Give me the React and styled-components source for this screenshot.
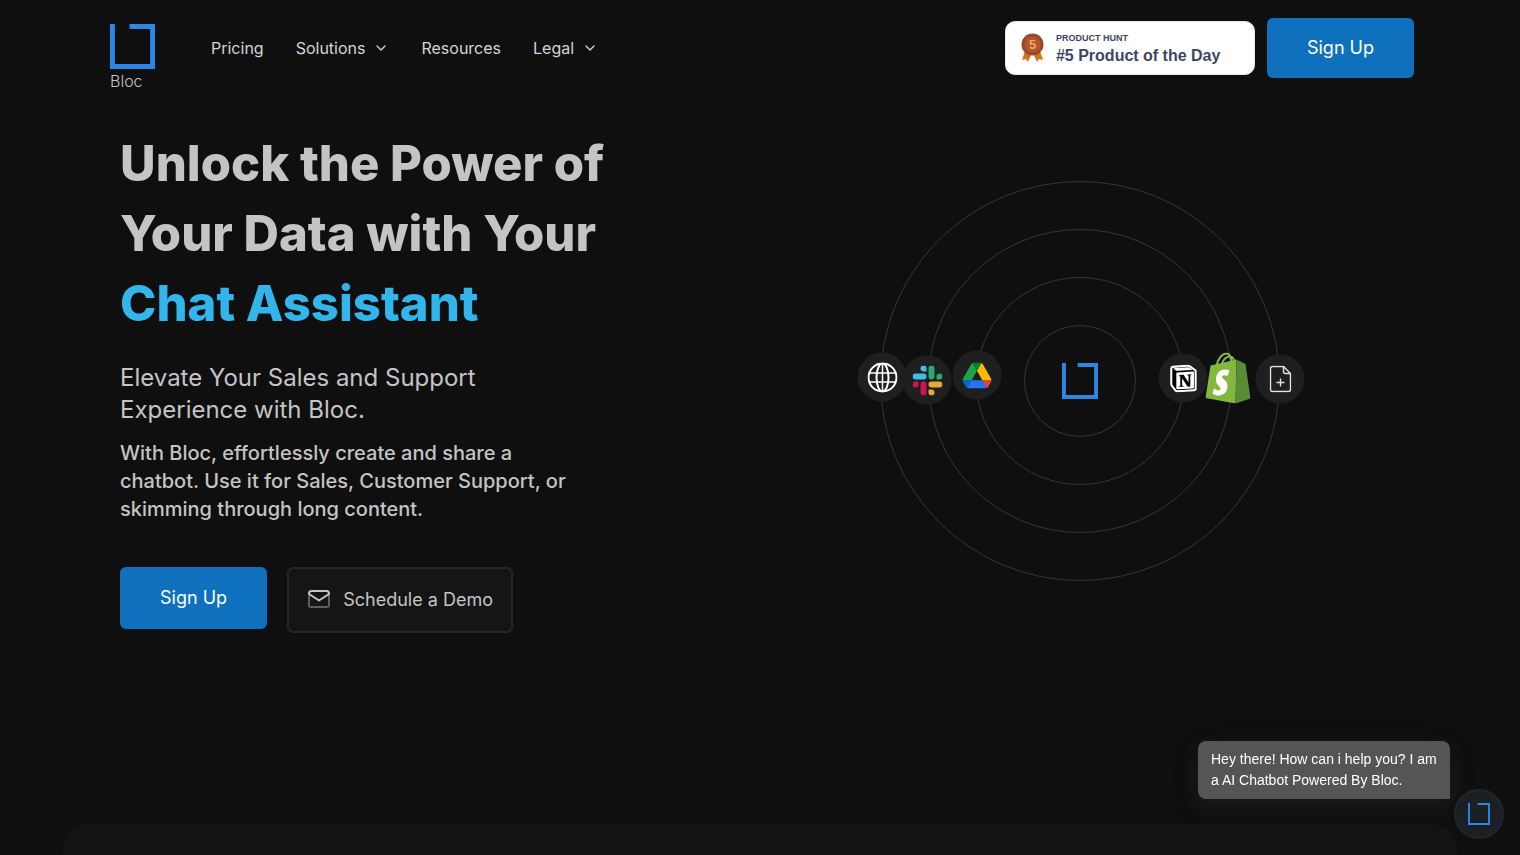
import React from "react";
import styled, { createGlobalStyle } from "styled-components";
import { ChevronDown } from "lucide-react";

const GlobalStyle = createGlobalStyle`
  * {
    box-sizing: border-box;
  }

  body {
    margin: 0;
    background: #0f0f0f;
    color: #c4c4c4;
    font-family: Inter, "Liberation Sans", sans-serif;
  }

  h1, h2, p {
    margin: 0;
  }
`;

const Page = styled.div`
  min-height: 100vh;
  display: flex;
  flex-direction: column;
`;

const Header = styled.header`
  display: flex;
  align-items: flex-start;
  justify-content: space-between;
  padding: 18px 106px 0 110px;
`;

const HeaderGroup = styled.div`
  display: flex;
  align-items: flex-start;
  gap: ${({ $gap }) => $gap}px;
`;

const Brand = styled.a`
  display: flex;
  flex-direction: column;
  padding-top: 6px;
  color: #c4c4c4;
  font-size: 16px;
  font-weight: 300;
  line-height: 24px;
  text-decoration: none;
`;

const Nav = styled.nav`
  display: flex;
  align-items: center;
  gap: 32px;
  height: 60px;
`;

const navItem = `
  color: #d1d5db;
  font-family: Inter, sans-serif;
  font-size: 16px;
  font-weight: 400;
  line-height: 24px;
`;

const NavLink = styled.a`
  ${navItem}
  text-decoration: none;
`;

const NavButton = styled.button`
  ${navItem}
  display: flex;
  align-items: center;
  gap: 8px;
  padding: 0;
  border: 0;
  background: none;
  cursor: pointer;
`;

const Award = styled.a`
  display: flex;
  align-items: center;
  gap: 12px;
  width: 250px;
  height: 54px;
  margin-top: 3px;
  padding-left: 15px;
  border: 1px solid #e5e7eb;
  border-radius: 10px;
  background: #fff;
  color: #3c4664;
  font-family: "Liberation Sans", Arial, sans-serif;
  font-weight: 700;
  text-decoration: none;
`;

const AwardText = styled.span`
  display: flex;
  flex-direction: column;
`;

const AwardLabel = styled.span`
  font-size: 9px;
  line-height: 14px;
`;

const AwardTitle = styled.span`
  font-size: 16px;
  line-height: 21px;
`;

const PrimaryButton = styled.button`
  min-width: 146px;
  height: ${({ $tall }) => ($tall ? 62 : 60)}px;
  padding: 0 40px 2px;
  border: 0;
  border-radius: 6px;
  background: #0f70bd;
  color: #fff;
  font-family: Inter, sans-serif;
  font-size: 18px;
  cursor: pointer;
`;

const SecondaryButton = styled.button`
  display: flex;
  align-items: center;
  justify-content: center;
  gap: 12px;
  min-width: 226px;
  height: 66px;
  padding: 0 16px 2px;
  border: 2px solid #262626;
  border-radius: 6px;
  background: #151515;
  color: #c4c4c4;
  font-family: Inter, sans-serif;
  font-size: 18px;
  cursor: pointer;
`;

const Hero = styled.main`
  flex: 1;
  display: grid;
  grid-template-columns: 1fr 1fr;
  align-items: start;
  padding: 36px 120px 0;
`;

const HeroCopy = styled.section`
  display: flex;
  flex-direction: column;
`;

const Title = styled.h1`
  font-size: 49px;
  font-weight: 800;
  line-height: 70px;
`;

const Accent = styled.span`
  color: #32b5ea;
`;

const Subtitle = styled.h2`
  max-width: 400px;
  margin-top: 23px;
  font-size: 24px;
  font-weight: 400;
  line-height: 32px;
`;

const Lead = styled.p`
  max-width: 480px;
  margin-top: 13px;
  font-size: 20px;
  font-weight: 500;
  line-height: 28px;
`;

const Actions = styled.div`
  display: flex;
  gap: 20px;
  margin-top: 44px;
`;

const Orbit = styled.section`
  position: relative;
  justify-self: center;
  width: 400px;
  height: 400px;
  margin-top: 52px;
  display: grid;
  place-items: center;
`;

const Ring = styled.div`
  grid-area: 1 / 1;
  width: ${({ $size }) => $size}px;
  height: ${({ $size }) => $size}px;
  border: 1px solid #363636;
  border-radius: 50%;
`;

const OrbitCenter = styled.div`
  grid-area: 1 / 1;
  display: flex;
`;

const Satellite = styled.div`
  position: absolute;
  left: ${({ $x }) => $x}px;
  top: ${({ $y }) => $y}px;
  width: 49px;
  height: 49px;
  transform: translate(-50%, -50%);
  display: flex;
  align-items: center;
  justify-content: center;
  border-radius: 50%;
  background: ${({ $bare }) => ($bare ? "none" : "#1f1f1f")};
`;

const NextPanel = styled.section`
  height: 31px;
  margin: 0 63px;
  border-radius: 24px 24px 0 0;
  background: #141414;
`;

const ChatBubble = styled.div`
  position: fixed;
  right: 70px;
  bottom: 56px;
  width: 252px;
  padding: 8px 0 8px 13px;
  border-radius: 8px 8px 0 8px;
  background: #555;
  box-shadow: 0 8px 24px rgba(85, 85, 85, 0.2);
  color: #fff;
  font-family: "Liberation Sans", Arial, sans-serif;
  font-size: 14px;
  line-height: 21px;
`;

const ChatButton = styled.button`
  position: fixed;
  right: 16px;
  bottom: 16px;
  width: 50px;
  height: 50px;
  padding: 0;
  display: flex;
  align-items: center;
  justify-content: center;
  border: 2px solid #20262e;
  border-radius: 50%;
  background: #1c1f24;
  cursor: pointer;
`;

const BlocLogo = ({ size, stroke = 5 }) => (
  <svg width={size} height={size} viewBox="0 0 46 46" fill="none" aria-hidden="true">
    <path
      d={`M${stroke / 2} 0V${46 - stroke / 2}H${46 - stroke / 2}V${stroke / 2}H20`}
      stroke="#2c86e4"
      strokeWidth={stroke}
    />
  </svg>
);

const Medal = () => (
  <svg width="23" height="30" viewBox="0 0 23 30" aria-hidden="true">
    <path d="M4 18 1 27l4-1 2 3 4-9zM19 18l3 9-4-1-2 3-4-9z" fill="#d4731c" />
    <circle cx="11.5" cy="11.5" r="11" fill="#934a2c" />
    <circle cx="11.5" cy="11.5" r="8" fill="#b0562e" />
    <text
      x="11.5"
      y="16"
      textAnchor="middle"
      fontFamily="Liberation Sans, sans-serif"
      fontWeight="700"
      fontSize="13"
      fill="#f5a45d"
    >
      5
    </text>
  </svg>
);

const MailIcon = () => (
  <svg width="24" height="24" viewBox="0 0 24 24" fill="none" strokeWidth="2" aria-hidden="true">
    <path d="M2 8v10a2 2 0 0 0 2 2h16a2 2 0 0 0 2-2V8" stroke="#5e5e5e" />
    <path
      d="M2 7v-.5A2.500 2.500 0 0 1 4.500 4h15A2.500 2.500 0 0 1 22 6.500V7l-10 6.500z"
      stroke="#c4c4c4"
      strokeLinejoin="round"
    />
  </svg>
);

const GlobeIcon = () => (
  <svg width="30" height="30" viewBox="0 0 30 30" fill="none" stroke="#fff" strokeWidth="2" aria-hidden="true">
    <circle cx="15" cy="15" r="14" />
    <ellipse cx="15" cy="15" rx="6" ry="14" />
    <path d="M2 10.500h26M2 19.500h26M15 1v28" strokeWidth="1.500" />
  </svg>
);

const SlackIcon = () => (
  <svg width="30" height="30" viewBox="0 0 30 30" aria-hidden="true">
    <path d="M11 0a3 3 0 0 1 3 3v3h-3a3 3 0 0 1 0-6z" fill="#43bde8" />
    <rect x="0" y="8" width="14" height="6" rx="3" fill="#43bde8" />
    <path d="M30 11a3 3 0 0 1-3 3h-3v-3a3 3 0 0 1 6 0z" fill="#2ea673" />
    <rect x="16" y="0" width="6" height="14" rx="3" fill="#2ea673" />
    <path d="M19 30a3 3 0 0 1-3-3v-3h3a3 3 0 0 1 0 6z" fill="#eaa833" />
    <rect x="16" y="16" width="14" height="6" rx="3" fill="#eaa833" />
    <path d="M0 19a3 3 0 0 1 3-3h3v3a3 3 0 0 1-6 0z" fill="#c9174f" />
    <rect x="8" y="16" width="6" height="14" rx="3" fill="#c9174f" />
  </svg>
);

const DriveIcon = () => (
  <svg width="29" height="26" viewBox="0 0 87.300 78" aria-hidden="true">
    <path d="m6.600 66.850 3.850 6.650c.8 1.400 1.950 2.500 3.300 3.300L27.500 53H0c0 1.550.4 3.100 1.200 4.500z" fill="#0066da" />
    <path d="M43.650 25 29.900 1.200c-1.350.8-2.500 1.900-3.300 3.300L1.200 48.500A9.060 9.060 0 0 0 0 53h27.500z" fill="#1da548" />
    <path d="M73.550 76.800c1.350-.8 2.500-1.900 3.300-3.300l1.600-2.750L86.100 57.500c.8-1.400 1.200-2.950 1.200-4.500H59.800l5.850 11.500z" fill="#ea4335" />
    <path d="M43.650 25 57.400 1.200C56.050.4 54.500 0 52.900 0H34.400c-1.600 0-3.150.45-4.500 1.200z" fill="#00832d" />
    <path d="M59.800 53H27.500L13.750 76.800c1.350.8 2.900 1.200 4.500 1.200h50.800c1.600 0 3.150-.45 4.500-1.200z" fill="#2673f5" />
    <path d="M73.400 26.500 60.700 4.500c-.8-1.400-1.950-2.500-3.300-3.300L43.650 25 59.800 53h27.450c0-1.550-.4-3.100-1.200-4.500z" fill="#ffba00" />
  </svg>
);

const NotionIcon = () => (
  <svg width="28" height="28" viewBox="-5 -5 106 110" aria-hidden="true">
    <path
      d="M6 4.300 61.300.2c6.800-.6 8.500-.2 12.800 2.900l17.700 12.500c2.900 2.100 3.900 2.700 3.900 5v68.300c0 4.200-1.600 6.800-7 7.200l-64.200 3.900c-4.100.2-6-.4-8.200-3.100L3.300 80C1 76.800 0 74.500 0 71.800V11.100C0 7.600 1.600 4.700 6 4.300z"
      fill="#000"
      stroke="#fff"
      strokeWidth="8"
    />
    <path
      d="M25.900 19.500c-5.200.4-6.400.4-9.400-2L8.900 11.500c-.8-.8-.4-1.800 1.600-2l53.200-3.900c4.400-.4 6.800 1.200 8.500 2.600l9.100 6.600c.4.200 1.400 1.400.2 1.400l-54.900 3.300zM19.800 88.300V30.400c0-2.600.8-3.700 3.100-3.900L86 22.800c2.100-.2 3.100 1.200 3.100 3.700V84c0 2.500-.4 4.700-3.900 4.900l-60.400 3.500c-3.500.2-5-1-5-4.100z"
      fill="#fff"
    />
    <path
      d="M79.400 33.500c.4 1.700 0 3.500-1.700 3.700l-2.900.5v42.800c-2.600 1.400-4.900 2.200-6.800 2.200-3.100 0-3.900-1-6.200-3.900L42.700 48.900v29l6 1.300s0 3.500-4.800 3.500l-13.400.8c-.4-.8 0-2.700 1.300-3.100l3.500-1V41.100l-4.800-.4c-.4-1.800.5-4.300 3.300-4.500l14.300-1 19.800 30.400V38.700l-5-.6c-.4-2.100 1.200-3.700 3.100-3.900z"
      fill="#000"
    />
  </svg>
);

const ShopifyIcon = () => (
  <svg width="45" height="51" viewBox="0 0 45 51" aria-hidden="true">
    <path
      d="M11 14C12 6 17 1 21 1s5 5 5 11M16 13c1-6 5-9 8-9s5 3 5 8"
      fill="none"
      stroke="#83b740"
      strokeWidth="2"
    />
    <path d="M5 13 31 7l-1 44L0 45.500z" fill="#83b740" />
    <path d="m31 7 4 2 5 2.500 5 34.500-15 5z" fill="#588c36" />
    <path
      d="m24 18-2 5.500q-5-2-5.500.8c0 2.400 5.500 3.200 5.500 9.200 0 6-4 9.500-9 9.500-3.500 0-6-2-6-2l1.500-5q6 3.500 6.500.5C15 33.500 10 32.500 10.500 26.500 11 20 15 17 19.500 17q3 0 4.500 1z"
      fill="#fff"
    />
  </svg>
);

const FilePlusIcon = () => (
  <svg width="22" height="27" viewBox="0 0 22 27" fill="none" stroke="#e4e4e4" strokeWidth="1.400" aria-hidden="true">
    <path d="M14 1H3a2 2 0 0 0-2 2v21a2 2 0 0 0 2 2h16a2 2 0 0 0 2-2V8zv5q0 2 2 2h5M11 13v8M7 17h8" />
  </svg>
);

const satellites = [
  { name: "Website", x: 2, y: 196, icon: <GlobeIcon /> },
  { name: "Slack", x: 47, y: 199, icon: <SlackIcon /> },
  { name: "Google Drive", x: 97, y: 194, icon: <DriveIcon /> },
  { name: "Notion", x: 303, y: 197, icon: <NotionIcon /> },
  { name: "File", x: 400, y: 198, icon: <FilePlusIcon /> },
  { name: "Shopify", x: 348, y: 197, icon: <ShopifyIcon />, bare: true },
];

const rings = [400, 304, 208, 112];

const App = () => {
  return (
    <>
      <GlobalStyle />
      <Page>
        <Header>
          <HeaderGroup $gap={56}>
            <Brand href="#">
              <BlocLogo size={45} />
              Bloc
            </Brand>
            <Nav>
              <NavLink href="#pricing">Pricing</NavLink>
              <NavButton>
                Solutions
                <ChevronDown size={16} />
              </NavButton>
              <NavLink href="#resources">Resources</NavLink>
              <NavButton>
                Legal
                <ChevronDown size={16} />
              </NavButton>
            </Nav>
          </HeaderGroup>
          <HeaderGroup $gap={12}>
            <Award href="#product-hunt">
              <Medal />
              <AwardText>
                <AwardLabel>PRODUCT HUNT</AwardLabel>
                <AwardTitle>#5 Product of the Day</AwardTitle>
              </AwardText>
            </Award>
            <PrimaryButton>Sign Up</PrimaryButton>
          </HeaderGroup>
        </Header>

        <Hero>
          <HeroCopy>
            <Title>
              Unlock the Power of
              <br />
              Your Data with Your
              <br />
              <Accent>Chat Assistant</Accent>
            </Title>
            <Subtitle>Elevate Your Sales and Support Experience with Bloc.</Subtitle>
            <Lead>
              With Bloc, effortlessly create and share a
              <br />
              chatbot. Use it for Sales, Customer Support, or
              <br />
              skimming through long content.
            </Lead>
            <Actions>
              <PrimaryButton $tall>Sign Up</PrimaryButton>
              <SecondaryButton>
                <MailIcon />
                Schedule a Demo
              </SecondaryButton>
            </Actions>
          </HeroCopy>

          <Orbit>
            {rings.map((size) => (
              <Ring key={size} $size={size} />
            ))}
            <OrbitCenter>
              <BlocLogo size={36} />
            </OrbitCenter>
            {satellites.map((item) => (
              <Satellite key={item.name} $x={item.x} $y={item.y} $bare={item.bare}>
                {item.icon}
              </Satellite>
            ))}
          </Orbit>
        </Hero>

        <NextPanel />
      </Page>

      <ChatBubble>
        Hey there! How can i help you? I am
        <br />a AI Chatbot Powered By Bloc.
      </ChatBubble>
      <ChatButton aria-label="Open chat">
        <BlocLogo size={22} stroke={4} />
      </ChatButton>
    </>
  );
};

export default App;
